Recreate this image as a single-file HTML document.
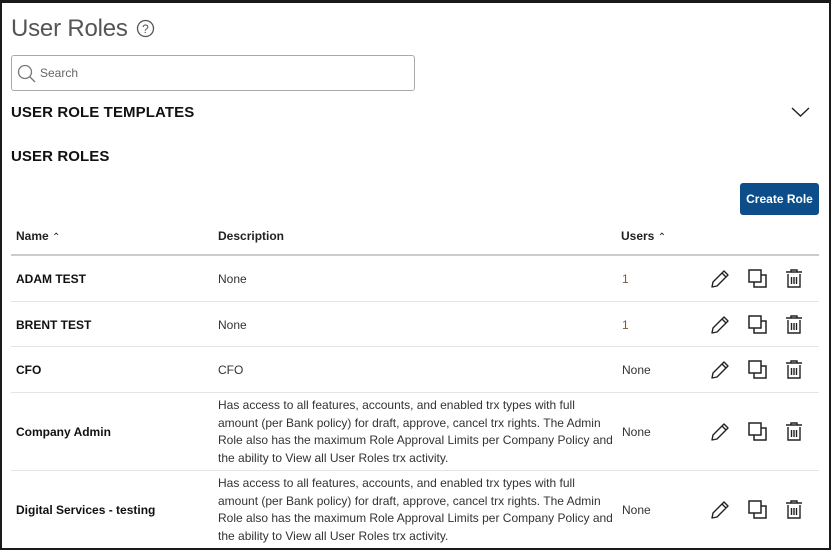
<!DOCTYPE html>
<html><head><style>
*{margin:0;padding:0;box-sizing:border-box}
body{width:831px;height:550px;overflow:hidden;background:#fff;font-family:"Liberation Sans",sans-serif;color:#222}
.frame{position:absolute;left:0;top:0;width:831px;height:550px;border:2px solid #1a1a1a;border-top-width:3px}
.abs{position:absolute}
h1{position:absolute;left:11px;top:15px;font-size:24px;font-weight:normal;color:#555;letter-spacing:-0.2px}
.search{position:absolute;left:11px;top:55px;width:404px;height:36px;border:1px solid #aaa;border-radius:3px}
.search span{position:absolute;left:28px;top:10px;font-size:12px;color:#666}
.sec{position:absolute;left:11px;font-size:15px;font-weight:bold;letter-spacing:0.1px;color:#111}
.btn{position:absolute;left:740px;top:183px;width:79px;height:32px;background:#0d4d8a;border-radius:3px;color:#fff;font-size:12px;font-weight:bold;text-align:center;line-height:32px}
.th{position:absolute;top:229px;font-size:12px;font-weight:bold;color:#222}
.hline{position:absolute;left:11px;width:808px;height:1px;background:#e4e4e4}
.cell{position:absolute;font-size:12px;color:#333}
.b{font-weight:bold;color:#111;left:16px}
.desc{left:218px;line-height:17.5px;width:400px}
.u{left:622px}
.one{color:#7a5a3a}
.icons{position:absolute;left:710px}
</style></head><body>
<div class="frame"></div>
<h1>User Roles</h1>
<svg class="abs" style="left:136px;top:19px" width="19" height="19" viewBox="0 0 19 19"><circle cx="9.5" cy="9.5" r="8" fill="none" stroke="#555" stroke-width="1.3"/><text x="9.5" y="14" text-anchor="middle" font-size="12" font-family="Liberation Sans" fill="#555">?</text></svg>
<div class="search"><svg class="abs" style="left:5px;top:8px" width="20" height="20"><circle cx="8" cy="8" r="6.5" fill="none" stroke="#777" stroke-width="1.3"/><line x1="12.5" y1="12.5" x2="18" y2="18" stroke="#777" stroke-width="1.3"/></svg><span>Search</span></div>
<div class="sec" style="top:104px">USER ROLE TEMPLATES</div>
<svg class="abs" style="left:791px;top:106px" width="19" height="12"><polyline points="1,2 9.5,10 18,2" fill="none" stroke="#222" stroke-width="1.4"/></svg>
<div class="sec" style="top:148px">USER ROLES</div>
<div class="btn">Create Role</div>
<div class="th" style="left:16px">Name <span style="font-weight:normal;font-size:10px">&#8963;</span></div>
<div class="th" style="left:218px">Description</div>
<div class="th" style="left:621px">Users <span style="font-weight:normal;font-size:10px">&#8963;</span></div>
<div class="hline" style="top:254px;height:2px;background:#ccc"></div>
<div class="hline" style="top:301px"></div>
<div class="hline" style="top:346px"></div>
<div class="hline" style="top:392px"></div>
<div class="hline" style="top:470px"></div>

<div class="cell b" style="top:272px">ADAM TEST</div><div class="cell desc" style="top:271px">None</div><div class="cell u one" style="top:272px">1</div>
<div class="cell b" style="top:318px">BRENT TEST</div><div class="cell desc" style="top:317px">None</div><div class="cell u one" style="top:318px">1</div>
<div class="cell b" style="top:363px">CFO</div><div class="cell desc" style="top:362px">CFO</div><div class="cell u" style="top:363px">None</div>
<div class="cell b" style="top:425px">Company Admin</div><div class="cell desc" style="top:397px">Has access to all features, accounts, and enabled trx types with full amount (per Bank policy) for draft, approve, cancel trx rights. The Admin Role also has the maximum Role Approval Limits per Company Policy and the ability to View all User Roles trx activity.</div><div class="cell u" style="top:425px">None</div>
<div class="cell b" style="top:503px">Digital Services - testing</div><div class="cell desc" style="top:475px">Has access to all features, accounts, and enabled trx types with full amount (per Bank policy) for draft, approve, cancel trx rights. The Admin Role also has the maximum Role Approval Limits per Company Policy and the ability to View all User Roles trx activity.</div><div class="cell u" style="top:503px">None</div>

<svg width="0" height="0" style="position:absolute"><defs>
<g id="ic">
<path d="M2 19 L3 14 L14 3 L18 7 L7 18 Z M12 5 L16 9" fill="none" stroke="#222" stroke-width="1.4" stroke-linejoin="round"/>
<rect x="39" y="2" width="12" height="12" fill="none" stroke="#222" stroke-width="1.5"/>
<path d="M51 7 H56 V19 H44 V14" fill="none" stroke="#222" stroke-width="1.5"/>
<path d="M76 4 H92 M81 4 V2 H87 V4 M78 6 V19 H90 V6 M81.5 9 V16 M84 9 V16 M86.5 9 V16" fill="none" stroke="#222" stroke-width="1.4"/>
</g></defs></svg>
<svg class="icons" style="top:268px" width="100" height="22"><use href="#ic"/></svg>
<svg class="icons" style="top:314px" width="100" height="22"><use href="#ic"/></svg>
<svg class="icons" style="top:359px" width="100" height="22"><use href="#ic"/></svg>
<svg class="icons" style="top:421px" width="100" height="22"><use href="#ic"/></svg>
<svg class="icons" style="top:499px" width="100" height="22"><use href="#ic"/></svg>
</body></html>
